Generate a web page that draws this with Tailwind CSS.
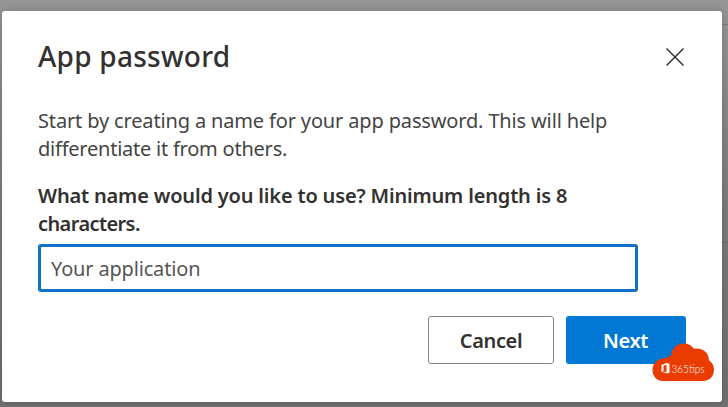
<!DOCTYPE html>
<html lang="en">
<head>
<meta charset="utf-8">
<title>App password</title>
<script src="https://cdn.jsdelivr.net/npm/@tailwindcss/browser@4"></script>
</head>
<body class="relative w-[728px] h-[407px] overflow-hidden bg-linear-to-b from-[#969696] via-[#7c7c7c] to-[#707070] pt-[11px] pl-[2px] font-['Noto_Sans','Open_Sans',sans-serif] text-[#323130]">
<div class="absolute right-0 top-[24px] h-px w-[6px] bg-[#7b7b7b]"></div>
<div class="absolute left-0 top-[242px] h-px w-full bg-[#696969]"></div>
<main class="relative w-[720px] h-[391px] rounded-[3px] bg-white px-9 pt-[26px] shadow-[0_0_8px_rgba(0,0,0,0.2)]">
  <header class="flex justify-between">
    <h1 class="-mt-px text-[28px] leading-[40px] font-medium tracking-[0.25px] whitespace-nowrap">App password</h1>
    <button class="mt-[10px] size-[20px]" aria-label="Close">
      <svg viewBox="0 0 20 20" class="block size-[20px]" fill="none" stroke="#323130" stroke-width="1.5"><path d="M.5 1.5l17 17M17.500 1.500l-17 17"/></svg>
    </button>
  </header>
  <p class="mt-[31px] text-[20px] leading-[28px] tracking-[-0.15px] whitespace-nowrap text-[#444]">Start by creating a name for your app password. This will help<br><span class="tracking-[-0.23px]">differentiate it from others.</span></p>
  <label for="name" class="mt-[19px] block text-[20px] leading-[28px] font-semibold tracking-[-0.17px] whitespace-nowrap">What name would you like to use? Minimum length is 8<br><span class="tracking-[-0.6px]">characters.</span></label>
  <div class="mt-[6px] flex h-[48px] w-[600px] items-center rounded-[3px] border-3 border-[#0f72c4] pl-[10px] pt-[2px]">
    <input id="name" class="w-full text-[20px] leading-[28px] tracking-[-0.17px] text-[#555] outline-none" value="Your application">
  </div>
  <footer class="mt-[24px] flex justify-end gap-3 text-[20px] font-semibold">
    <button class="h-[48px] w-[126px] rounded-[3px] border border-[#8a8886] pt-[2px] tracking-[-0.35px]">Cancel</button>
    <button class="h-[48px] w-[120px] rounded-[3px] bg-[#0078d4] pt-[2px] pr-[1px] tracking-[-0.4px] text-white">Next</button>
  </footer>
  <svg class="absolute left-[650px] top-[332px] h-[39px] w-[63px]" viewBox="0 0 63 39">
    <path d="M11 38C4.500 38 .5 33 .5 27c0-6 4-10.500 10-11.500 4-.5 6-1.500 8.500-3C20 5 25 .5 31.500 .5c5 0 8.500 2 10.500 5.500 8-2 15 3.500 15 11.500 3.500 2 5 5.500 5 9C62 33 58 38 51 38Z" fill="#eb3c00"/>
    <path fill-rule="evenodd" d="M9.500 22l5-2 3 .8v8.900l-3 .8-5-2 5 .5v-7.200l-3 .9v5.300l-2 .7Z" fill="#fff"/>
    <text x="19.500" y="29.500" font-family="Lato, sans-serif" font-weight="300" font-size="11.500" textLength="33" lengthAdjust="spacingAndGlyphs" fill="#fff">365tips</text>
  </svg>
</main>
</body>
</html>
